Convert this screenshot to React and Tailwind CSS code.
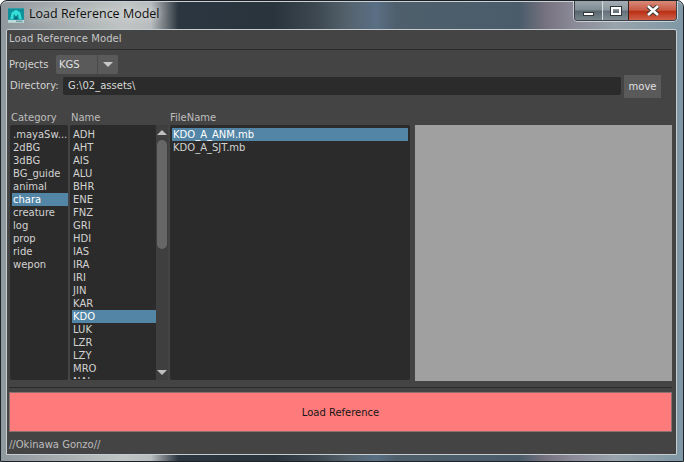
const cats = [".mayaSw...","2dBG","3dBG","BG_guide","animal","chara","creature","log","prop","ride","wepon"];
const names = ["ADH","AHT","AIS","ALU","BHR","ENE","FNZ","GRI","HDI","IAS","IRA","IRI","JIN","KAR","KDO","LUK","LZR","LZY","MRO","NAJ"];
const files = ["KDO_A_ANM.mb","KDO_A_SJT.mb"];
const font = { fontFamily: '"DejaVu Sans", sans-serif' };

function Row({ label, selected }) {
  return (
    <div className={`h-[13px] shrink-0 pl-[1px] leading-[13px] whitespace-nowrap ${selected ? "bg-[#5285a6] text-white" : "text-[#d2d2d2]"}`}>
      {label}
    </div>
  );
}

function Logo() {
  return (
    <svg width="16" height="15" viewBox="0 0 22 20" className="shrink-0 mt-[2px]">
      <rect width="22" height="20" fill="#bcdcdc" />
      <rect x="0" y="0" width="22" height="16" fill="#0e8f9a" />
      <path d="M3 15 L5 6 L11 2 L17 6 L19 15 L15 15 L14 8 L11 11 L8 8 L7 15 Z" fill="#35e0d8" />
      <path d="M9 15 L11 11 L13 15 Z" fill="#0b5f6b" />
      <rect x="11" y="17" width="9" height="2" fill="#6f9fa5" />
    </svg>
  );
}

function Caption() {
  return (
    <div className="flex w-[103px] h-[20px] border border-t-0 border-[#3c4248] rounded-b-[4px] overflow-hidden shrink-0 shadow-[0_0_0_1px_rgba(255,255,255,0.55)]">
      <div className="w-[28px] flex items-center justify-center bg-[linear-gradient(180deg,#9aa5ac_0%,#7f8c94_48%,#59656d_52%,#77858d_100%)] border-r border-[#d8dde0]">
        <div className="w-[11px] h-[4px] mt-[6px] bg-white border border-[#30363a]" />
      </div>
      <div className="w-[26px] flex items-center justify-center bg-[linear-gradient(180deg,#a4aeb4_0%,#8b979e_48%,#65717a_52%,#808d95_100%)] border-r border-[#3a2020]">
        <div className="w-[10px] h-[8px] border-2 border-white outline outline-1 outline-[#30363a]" />
      </div>
      <div className="flex-1 flex items-center justify-center bg-[linear-gradient(180deg,#d88a78_0%,#c85a45_48%,#b93015_55%,#d0604a_100%)]">
        <svg width="14" height="11" viewBox="0 0 14 11">
          <path d="M2 1 L12 10 M12 1 L2 10" stroke="#30363a" strokeWidth="4.4" />
          <path d="M2 1 L12 10 M12 1 L2 10" stroke="#ffffff" strokeWidth="2.6" />
        </svg>
      </div>
    </div>
  );
}

export default function App() {
  return (
    <div style={font} className="w-[684px] h-[462px] overflow-hidden flex flex-col text-[10px] text-[#d2d2d2] bg-[linear-gradient(90deg,#8f989c_0%,#c0c4c4_18%,#b8bcbe_22%,#2c3640_26%,#2a343d_40%,#3c474f_46%,#55636e_51%,#5a6f85_55%,#4f5f6c_58%,#4a5c6a_76%,#787380_80%,#8b8a98_84%,#98a3ab_90%,#7f98a5_100%)] rounded-t-[7px] border border-[#1c2227] shadow-[inset_0_1px_0_#c8d0d4] pl-[5px] pr-[6px]">
      <div className="h-[28px] shrink-0 flex justify-between">
        <div className="flex items-center h-[26px] gap-[5px] pl-[2px]">
          <Logo />
          <span style={{ fontFamily: '"Open Sans", sans-serif' }} className="text-[12.5px] leading-[20px] text-[#101010] [text-shadow:0_0_8px_#fff]">Load Reference Model</span>
        </div>
        <Caption />
      </div>
      <div className="flex-1 min-h-0 flex flex-col bg-[#444444] border border-[#c6cdd1] rounded-t-[2px] mb-[6px] pl-[2px] pr-[4px]">
        <div className="h-[20px] shrink-0 flex items-center pb-[2px] border-b border-[#2a2a2a] text-[#c4c4c4] tracking-[0.1px]">Load Reference Model</div>
        <div className="h-[20px] mt-[4px] shrink-0 flex items-center">
          <span className="w-[47px] shrink-0">Projects</span>
          <div className="flex w-[62px] h-[19px] bg-[#5a5a5a] rounded-[2px]">
            <div className="w-[42px] pl-[3px] leading-[19px] border-r border-[#484848] text-[#e0e0e0]">KGS</div>
            <div className="flex-1 flex items-center justify-center">
              <div className="w-0 h-0 border-x-[5px] border-x-transparent border-t-[5px] border-t-[#c8c8c8]" />
            </div>
          </div>
        </div>
        <div className="h-[23px] mt-[1px] shrink-0 flex items-start leading-[22px]">
          <span className="w-[54px] pl-[1px] shrink-0">Directory:</span>
          <div className="mt-[2px] w-[558px] h-[18px] pl-[5px] leading-[18px] bg-[#2b2b2b] rounded-[2px] text-[#d8d8d8]">G:\02_assets\</div>
          <div className="ml-[3px] w-[37px] h-[23px] bg-[#5a5a5a] flex items-center justify-center text-[#e0e0e0]">move</div>
        </div>
        <div className="h-[13px] mt-[13px] shrink-0 flex leading-[13px] text-[#bdbdbd]">
          <span className="w-[60px] pl-[2px]">Category</span>
          <span className="w-[101px] pl-[2px]">Name</span>
          <span>FileName</span>
        </div>
        <div className="h-[256px] mt-[1px] shrink-0 flex pl-[1px]">
          <div className="w-[58px] h-[255px] bg-[#2b2b2b] rounded-[2px] pl-[2px] pt-[3px] flex flex-col overflow-hidden">
            {cats.map((c) => <Row key={c} label={c} selected={c === "chara"} />)}
          </div>
          <div className="ml-[2px] w-[98px] h-[255px] flex rounded-[2px] overflow-hidden bg-[#2b2b2b]">
            <div className="w-[86px] pl-[2px] pt-[3px] flex flex-col overflow-hidden h-[254px]">
              {names.map((n) => <Row key={n} label={n} selected={n === "KDO"} />)}
            </div>
            <div className="w-[12px] flex flex-col items-center bg-[#3f3f3f] pt-[5px]">
              <div className="shrink-0 w-0 h-0 border-x-[5px] border-x-transparent border-b-[5px] border-b-[#c0c0c0]" />
              <div className="shrink-0 mt-[5px] w-[10px] h-[109px] rounded-[5px] bg-[#666666]" />
              <div className="flex-1" />
              <div className="shrink-0 mb-[5px] w-0 h-0 border-x-[5px] border-x-transparent border-t-[5px] border-t-[#c0c0c0]" />
            </div>
          </div>
          <div className="ml-[2px] w-[240px] h-[255px] bg-[#2b2b2b] rounded-[2px] px-[2px] pt-[3px] flex flex-col">
            {files.map((f) => <Row key={f} label={f} selected={f === "KDO_A_ANM.mb"} />)}
          </div>
          <div className="ml-[5px] flex-1 bg-[#a0a0a0]" />
        </div>
        <div className="h-px mt-[6px] shrink-0 bg-[#2a2a2a]" />
        <div className="h-[40px] mt-[4px] shrink-0 bg-[#ff7b7b] border border-[#8a7070] flex items-center justify-center text-[#151515]">Load Reference</div>
        <div className="flex-1 flex items-center text-[#bdbdbd] pt-[3px]">//Okinawa Gonzo//</div>
      </div>
    </div>
  );
}
